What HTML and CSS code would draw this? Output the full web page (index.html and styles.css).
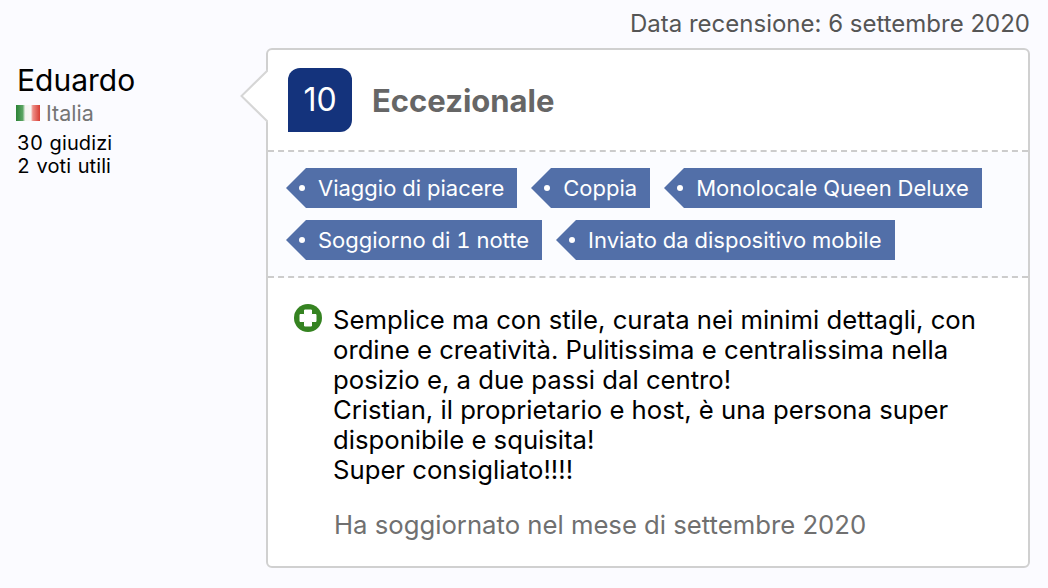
FILE: index.html
```html
<!DOCTYPE html>
<html lang="it">
<head>
    <meta charset="UTF-8">
    <title>Recensione</title>
    <link rel="stylesheet" href="styles.css">
</head>
<body>
    <p class="review-date">Data recensione: 6 settembre 2020</p>
    <div class="review">
        <div class="guest">
            <div class="guest-name">Eduardo</div>
            <div class="guest-country">
                <span class="flag"></span>
                Italia
            </div>
            <div class="guest-stats">30 giudizi<br>2 voti utili</div>
        </div>
        <div class="card">
            <svg class="card-arrow" width="28" height="56" viewBox="0 0 28 56">
                <path d="M28 2 L1.5 28 L28 54" fill="#fff" stroke="#d6d6d6" stroke-width="2"/>
            </svg>
            <div class="card-head">
                <div class="score">10</div>
                <div class="score-label">Eccezionale</div>
            </div>
            <div class="tags">
                <div class="tag">Viaggio di piacere</div>
                <div class="tag">Coppia</div>
                <div class="tag">Monolocale Queen Deluxe</div>
                <div class="tag">Soggiorno di 1 notte</div>
                <div class="tag">Inviato da dispositivo mobile</div>
            </div>
            <div class="card-body">
                <svg class="plus" width="28" height="28" viewBox="0 0 28 28">
                    <circle cx="14" cy="14" r="14" fill="#358321"/>
                    <path d="M10.5 6 H17.5 V10.5 H22 V17.5 H17.5 V22 H10.5 V17.5 H6 V10.5 H10.5 Z" fill="#fff" stroke="#fff" stroke-width="1" stroke-linejoin="round"/>
                </svg>
                <div>
                    <p class="comment">Semplice ma con stile, curata nei minimi dettagli, con ordine e creatività. Pulitissima e centralissima nella posizio e, a due passi dal centro!<br>Cristian, il proprietario e host, è una persona super disponibile e squisita!<br>Super consigliato!!!!</p>
                    <p class="stay">Ha soggiornato nel mese di settembre 2020</p>
                </div>
            </div>
        </div>
    </div>
</body>
</html>
```

FILE: styles.css
```css
* {
    box-sizing: border-box;
}

body {
    margin: 0;
    padding: 10px 18px 0 17px;
    background-color: #fbfbff;
    font-family: Inter, "Liberation Sans", sans-serif;
    color: #000;
}

.review-date {
    margin: 0 0 10px;
    height: 28px;
    line-height: 28px;
    text-align: right;
    font-size: 24px;
    color: #555;
}

.review {
    display: flex;
}

.guest {
    width: 249px;
    padding-top: 15px;
    flex-shrink: 0;
}

.guest-name {
    font-size: 30px;
    line-height: 34px;
}

.guest-country {
    display: flex;
    align-items: center;
    gap: 6px;
    margin-top: 2px;
    font-size: 21.5px;
    line-height: 28px;
    color: #757575;
}

.flag {
    width: 24px;
    height: 16px;
    margin-left: -1px;
    background: linear-gradient(90deg, #2c8236 0%, #5aa562 28%, #f3f3f0 38%, #f7f7f4 62%, #ee8f88 70%, #d63c33 100%);
}

.guest-stats {
    margin-top: 5px;
    font-size: 20px;
    font-variant-numeric: tabular-nums;
    letter-spacing: 0.1px;
    word-spacing: 1px;
    line-height: 23px;
}

.card {
    position: relative;
    width: 764px;
    height: 520px;
    background-color: #fff;
    border: 2px solid #d0d0d0;
    border-radius: 6px;
}

.card-arrow {
    position: absolute;
    left: -28px;
    top: 18px;
}

.card-head {
    display: flex;
    align-items: center;
    gap: 20px;
    height: 102px;
    padding: 0 20px;
    border-bottom: 2px dashed #ccc;
}

.score {
    width: 64px;
    height: 64px;
    background-color: #14337c;
    border-radius: 12px 12px 12px 0;
    color: #fff;
    font-size: 32px;
    line-height: 64px;
    text-align: center;
}

.score-label {
    font-size: 31px;
    font-weight: 700;
    color: #666;
}

.tags {
    display: flex;
    flex-wrap: wrap;
    gap: 12px 14px;
    height: 126px;
    padding: 16px 18px 0;
    background-color: #fbfcff;
    border-bottom: 2px dashed #ccc;
    align-content: flex-start;
}

.tag {
    position: relative;
    height: 40px;
    margin-left: 20px;
    padding: 0 13px 0 12px;
    background-color: #526fa8;
    color: #fff;
    font-size: 22px;
    font-variant-numeric: tabular-nums;
    line-height: 40px;
}

.tag::before {
    content: "";
    position: absolute;
    left: -20px;
    top: 0;
    border-style: solid;
    border-width: 20px 20px 20px 0;
    border-color: transparent #526fa8 transparent transparent;
}

.tag::after {
    content: "";
    position: absolute;
    left: -7px;
    top: 17px;
    width: 6px;
    height: 6px;
    border-radius: 50%;
    background-color: #fff;
}

.card-body {
    display: flex;
    gap: 11px;
    padding: 26px 40px 0 26px;
}

.plus {
    flex-shrink: 0;
}

.comment {
    margin: 1px 0 0;
    font-size: 25.7px;
    line-height: 30px;
}

.stay {
    margin: 25px 0 0 1px;
    font-size: 25.7px;
    line-height: 30px;
    color: #707070;
}
```
